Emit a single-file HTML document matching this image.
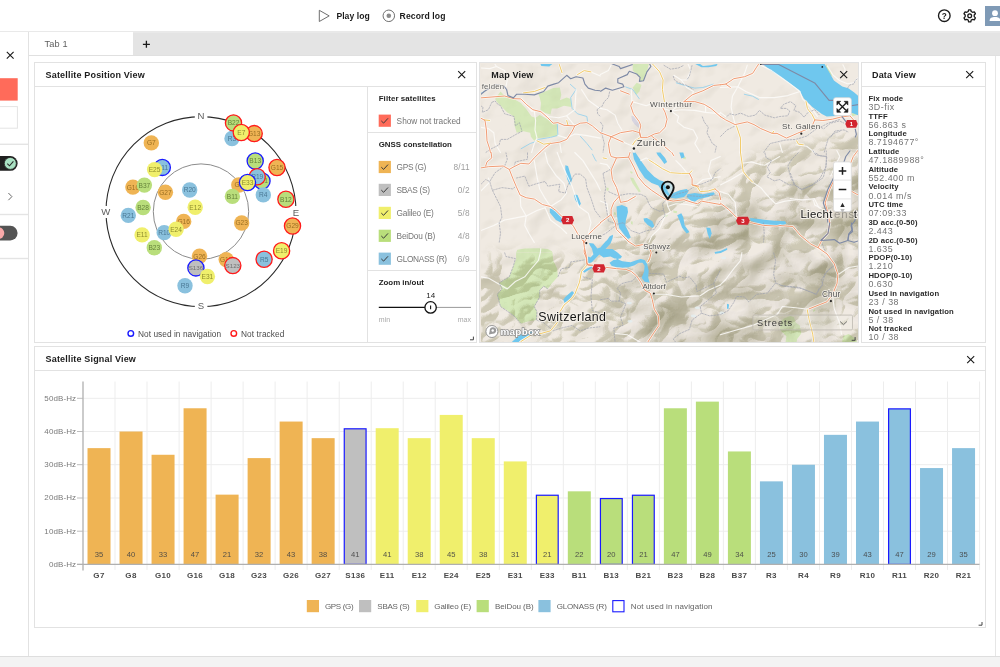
<!DOCTYPE html>
<html><head><meta charset="utf-8"><title>GNSS</title>
<style>
*{box-sizing:border-box;margin:0;padding:0}
html,body{width:1000px;height:667px;overflow:hidden;background:#fff;font-family:"Liberation Sans",sans-serif;}
body{position:relative;color:#222;will-change:transform}
.abs{position:absolute}
.t{position:absolute;white-space:nowrap;line-height:1}
.b{font-weight:bold}
.panel{position:absolute;background:#fff;border:1.5px solid #e2e2e2}
.hl{position:absolute;height:1.5px;background:#e2e2e2}
.vl{position:absolute;width:1.5px;background:#e2e2e2}
.cb{position:absolute;width:12px;height:12px}
.lab{color:#757575;font-size:8.3px}
.cnt{color:#9e9e9e;font-size:8.3px;letter-spacing:.25px}
.dl{font-weight:bold;font-size:7.9px;color:#2b2b2b;letter-spacing:.1px}
.dv{font-size:9.4px;color:#7d7d7d;letter-spacing:.25px}
svg text{font-family:"Liberation Sans",sans-serif}
</style></head><body>

<!-- top bar -->
<svg class="abs" style="left:0;top:0" width="1000" height="31" viewBox="0 0 1000 31">
  <path d="M319.3 10.3 L329.2 15.9 L319.3 21.5 Z" fill="none" stroke="#6f6f6f" stroke-width="1"/>
  <circle cx="388.8" cy="15.8" r="5.75" fill="none" stroke="#6f6f6f" stroke-width="1"/>
  <circle cx="388.8" cy="15.8" r="2.3" fill="#8a8a8a"/>
  <!-- help -->
  <circle cx="944.3" cy="15.7" r="5.8" fill="none" stroke="#1a1a1a" stroke-width="1.35"/>
  <text x="944.3" y="18.6" text-anchor="middle" font-size="8.2" font-weight="bold" fill="#1a1a1a">?</text>
  <!-- gear -->
  <g transform="translate(969.7 15.8)" fill="none" stroke="#1a1a1a">
    <circle r="1.9" stroke-width="1.3"/>
    <path stroke-width="1.3" stroke-linejoin="round" d="M-1.1,-6 L1.1,-6 L1.5,-4.3 L2.9,-3.5 L4.6,-4 L5.7,-2.1 L4.5,-0.8 L4.5,0.8 L5.7,2.1 L4.6,4 L2.9,3.5 L1.5,4.3 L1.1,6 L-1.1,6 L-1.5,4.3 L-2.9,3.5 L-4.6,4 L-5.7,2.1 L-4.5,0.8 L-4.5,-0.8 L-5.7,-2.1 L-4.6,-4 L-2.9,-3.5 L-1.5,-4.3 Z"/>
  </g>
  <!-- avatar -->
  <rect x="985" y="6" width="20" height="20" fill="#7f9ab6"/>
  <circle cx="995" cy="13.2" r="2.9" fill="#fff"/>
  <path d="M989.6 21 C989.6 17.6 992 16.9 995 16.9 C998 16.9 1000.4 17.6 1000.4 21 Z" fill="#fff"/>
</svg>
<div class="t b" style="left:336.4px;top:11.6px;font-size:8.6px;color:#1c1c1c;letter-spacing:.05px">Play log</div>
<div class="t b" style="left:399.6px;top:11.6px;font-size:8.6px;color:#1c1c1c;letter-spacing:.1px">Record log</div>

<!-- tab bar -->
<div class="abs" style="left:0;top:31px;width:1000px;height:25px;background:#e4e4e4"></div>
<div class="abs" style="left:0;top:31px;width:1000px;height:1.5px;background:#e9e9e9"></div>
<div class="abs" style="left:28px;top:55px;width:972px;height:1.3px;background:#e0e0e0"></div>
<div class="abs" style="left:29px;top:32.3px;width:104px;height:22.7px;background:#fff"></div>
<div class="t" style="left:44.6px;top:40.3px;font-size:9.2px;color:#5e5e5e;letter-spacing:.15px">Tab 1</div>
<svg class="abs" style="left:141px;top:39px" width="11" height="11" viewBox="0 0 11 11"><path d="M5.4 1.8V8.8M1.9 5.3H8.9" stroke="#1a1a1a" stroke-width="1.3" fill="none"/></svg>

<!-- sidebar -->
<div class="abs" style="left:0;top:32px;width:28px;height:625px;background:#fff"></div>
<div class="abs" style="left:28px;top:32px;width:1.4px;height:625px;background:#e2e2e2"></div>
<svg class="abs" style="left:0;top:32px" width="28" height="240" viewBox="0 32 28 240">
  <path d="M6.8 51.9 L13.6 58.7 M13.6 51.9 L6.8 58.7" stroke="#1a1a1a" stroke-width="1.1" fill="none"/>
  <rect x="-1" y="78.2" width="18.7" height="22.4" fill="#ff6b5a"/>
  <rect x="-1" y="106.6" width="18.4" height="21.6" fill="#fff" stroke="#e4e4e4" stroke-width="1"/>
  <rect x="0" y="143.6" width="28" height="1.4" fill="#e4e4e4"/>
  <rect x="-8" y="156" width="25.6" height="14.8" rx="7.4" fill="#1f1f1f"/>
  <circle cx="10.3" cy="163.4" r="6" fill="#a9e2c3" stroke="#2a2a2a" stroke-width=".8"/>
  <path d="M7.3 163.6 L9.5 165.8 L13.4 161.3" stroke="#2b2b2b" stroke-width="1.1" fill="none"/>
  <path d="M8.4 193 L11.9 196.6 L8.4 200.2" stroke="#6a6a6a" stroke-width="1" fill="none"/>
  <rect x="0" y="213.8" width="28" height="1.4" fill="#e4e4e4"/>
  <rect x="-8" y="225.8" width="25.6" height="14.6" rx="7.3" fill="#545454"/>
  <circle cx="-1.6" cy="233.1" r="5.9" fill="#f9a9a9"/>
  <rect x="0" y="257.8" width="28" height="1.4" fill="#e4e4e4"/>
</svg>

<!-- bottom bar -->
<div class="abs" style="left:0;top:656px;width:1000px;height:11px;background:#f3f3f3;border-top:1.4px solid #dedede"></div>
<!-- right scrollbar line -->
<div class="abs" style="left:995px;top:56px;width:1.3px;height:600px;background:#e6e6e6"></div>

<!-- ============ Satellite Position View ============ -->
<div class="panel" style="left:34px;top:62px;width:443px;height:281px"></div>
<div class="hl" style="left:34px;top:85.6px;width:443px"></div>
<div class="vl" style="left:366.5px;top:86px;height:256px"></div>
<div class="hl" style="left:367px;top:131.6px;width:110px"></div>
<div class="hl" style="left:367px;top:269.6px;width:110px"></div>
<div class="t b" style="left:45.6px;top:71.1px;font-size:9px;color:#1c1c1c;letter-spacing:.17px">Satellite Position View</div>
<svg class="abs" style="left:456px;top:69px" width="12" height="12" viewBox="0 0 12 12"><path d="M2.2 2.2 L9.2 9.2 M9.2 2.2 L2.2 9.2" stroke="#1a1a1a" stroke-width="1.1" fill="none"/></svg>

<svg class="abs" style="left:35px;top:87px" width="332" height="255" viewBox="35 87 332 255">
  <circle cx="201" cy="211.6" r="95" fill="none" stroke="#2a2a2a" stroke-width="1.1"/>
  <circle cx="201" cy="211.6" r="47.7" fill="none" stroke="#8c8c8c" stroke-width="1"/>
  <rect x="194.8" y="111" width="12.6" height="10" fill="#fff"/>
  <rect x="194.8" y="301" width="12.6" height="10" fill="#fff"/>
  <rect x="100" y="206" width="12" height="12" fill="#fff"/>
  <rect x="290" y="206" width="12" height="12" fill="#fff"/>
  <g font-size="9.6" fill="#5c5c5c" text-anchor="middle">
    <text x="200.9" y="118.8">N</text>
    <text x="200.9" y="309">S</text>
    <text x="105.7" y="215">W</text>
    <text x="296" y="215.6">E</text>
  </g>
<circle cx="232" cy="138.5" r="7.7" fill="#8ac1de"/>
<text x="232" y="140.9" text-anchor="middle" font-size="6.6" fill="#4a7894">R3</text>
<circle cx="233.5" cy="122.9" r="8.1" fill="#b9de7b" stroke="#ff1a1a" stroke-width="1.3"/>
<text x="233.5" y="125.30000000000001" text-anchor="middle" font-size="6.6" fill="#66833a">B22</text>
<circle cx="254.2" cy="133.6" r="8.1" fill="#efb454" stroke="#ff1a1a" stroke-width="1.3"/>
<text x="254.2" y="136.0" text-anchor="middle" font-size="6.6" fill="#9a6f22">G13</text>
<circle cx="241.3" cy="132.5" r="8.1" fill="#f0ef6c" stroke="#ff1a1a" stroke-width="1.3"/>
<text x="241.3" y="134.9" text-anchor="middle" font-size="6.6" fill="#8f8e2e">E7</text>
<circle cx="151.3" cy="142.9" r="7.7" fill="#efb454"/>
<text x="151.3" y="145.3" text-anchor="middle" font-size="6.6" fill="#9a6f22">G7</text>
<circle cx="255.2" cy="161" r="8.1" fill="#b9de7b" stroke="#1a1aff" stroke-width="1.3"/>
<text x="255.2" y="163.4" text-anchor="middle" font-size="6.6" fill="#66833a">B13</text>
<circle cx="277" cy="167.5" r="8.1" fill="#efb454" stroke="#ff1a1a" stroke-width="1.3"/>
<text x="277" y="169.9" text-anchor="middle" font-size="6.6" fill="#9a6f22">G15</text>
<circle cx="162.3" cy="167.4" r="8.1" fill="#8ac1de" stroke="#1a1aff" stroke-width="1.3"/>
<text x="162.3" y="169.8" text-anchor="middle" font-size="6.6" fill="#4a7894">R11</text>
<circle cx="154.6" cy="169.6" r="7.7" fill="#f0ef6c"/>
<text x="154.6" y="172.0" text-anchor="middle" font-size="6.6" fill="#8f8e2e">E25</text>
<circle cx="262" cy="181" r="8.1" fill="#b9de7b" stroke="#1a1aff" stroke-width="1.3"/>
<text x="262" y="183.4" text-anchor="middle" font-size="6.6" fill="#66833a">B21</text>
<circle cx="257.2" cy="176.8" r="8.1" fill="#8ac1de" stroke="#ff1a1a" stroke-width="1.3"/>
<text x="257.2" y="179.20000000000002" text-anchor="middle" font-size="6.6" fill="#4a7894">R19</text>
<circle cx="238.8" cy="185" r="7.7" fill="#efb454"/>
<text x="238.8" y="187.4" text-anchor="middle" font-size="6.6" fill="#9a6f22">G8</text>
<circle cx="247.5" cy="182.5" r="8.1" fill="#f0ef6c" stroke="#1a1aff" stroke-width="1.3"/>
<text x="247.5" y="184.9" text-anchor="middle" font-size="6.6" fill="#8f8e2e">E33</text>
<circle cx="132.9" cy="187.1" r="7.7" fill="#efb454"/>
<text x="132.9" y="189.5" text-anchor="middle" font-size="6.6" fill="#9a6f22">G10</text>
<circle cx="144.4" cy="185.1" r="7.7" fill="#b9de7b"/>
<text x="144.4" y="187.5" text-anchor="middle" font-size="6.6" fill="#66833a">B37</text>
<circle cx="165.4" cy="192.3" r="7.7" fill="#efb454"/>
<text x="165.4" y="194.70000000000002" text-anchor="middle" font-size="6.6" fill="#9a6f22">G27</text>
<circle cx="189.7" cy="190" r="7.7" fill="#8ac1de"/>
<text x="189.7" y="192.4" text-anchor="middle" font-size="6.6" fill="#4a7894">R20</text>
<circle cx="232.4" cy="196.4" r="7.7" fill="#b9de7b"/>
<text x="232.4" y="198.8" text-anchor="middle" font-size="6.6" fill="#66833a">B11</text>
<circle cx="263.3" cy="194.9" r="7.7" fill="#8ac1de"/>
<text x="263.3" y="197.3" text-anchor="middle" font-size="6.6" fill="#4a7894">R4</text>
<circle cx="285.9" cy="199.3" r="8.1" fill="#b9de7b" stroke="#ff1a1a" stroke-width="1.3"/>
<text x="285.9" y="201.70000000000002" text-anchor="middle" font-size="6.6" fill="#66833a">B12</text>
<circle cx="195.2" cy="207.2" r="7.7" fill="#f0ef6c"/>
<text x="195.2" y="209.6" text-anchor="middle" font-size="6.6" fill="#8f8e2e">E12</text>
<circle cx="143.1" cy="207.5" r="7.7" fill="#b9de7b"/>
<text x="143.1" y="209.9" text-anchor="middle" font-size="6.6" fill="#66833a">B28</text>
<circle cx="128.3" cy="215.4" r="7.7" fill="#8ac1de"/>
<text x="128.3" y="217.8" text-anchor="middle" font-size="6.6" fill="#4a7894">R21</text>
<circle cx="183.7" cy="221.4" r="7.7" fill="#efb454"/>
<text x="183.7" y="223.8" text-anchor="middle" font-size="6.6" fill="#9a6f22">G16</text>
<circle cx="241.7" cy="223" r="7.7" fill="#efb454"/>
<text x="241.7" y="225.4" text-anchor="middle" font-size="6.6" fill="#9a6f22">G23</text>
<circle cx="292.5" cy="226" r="8.1" fill="#efb454" stroke="#ff1a1a" stroke-width="1.3"/>
<text x="292.5" y="228.4" text-anchor="middle" font-size="6.6" fill="#9a6f22">G29</text>
<circle cx="164.2" cy="232.6" r="7.7" fill="#8ac1de"/>
<text x="164.2" y="235.0" text-anchor="middle" font-size="6.6" fill="#4a7894">R10</text>
<circle cx="176.1" cy="229.3" r="7.7" fill="#f0ef6c"/>
<text x="176.1" y="231.70000000000002" text-anchor="middle" font-size="6.6" fill="#8f8e2e">E24</text>
<circle cx="142.1" cy="234.9" r="7.7" fill="#f0ef6c"/>
<text x="142.1" y="237.3" text-anchor="middle" font-size="6.6" fill="#8f8e2e">E11</text>
<circle cx="154.3" cy="247.8" r="7.7" fill="#b9de7b"/>
<text x="154.3" y="250.20000000000002" text-anchor="middle" font-size="6.6" fill="#66833a">B23</text>
<circle cx="281.6" cy="250.7" r="8.1" fill="#f0ef6c" stroke="#ff1a1a" stroke-width="1.3"/>
<text x="281.6" y="253.1" text-anchor="middle" font-size="6.6" fill="#8f8e2e">E19</text>
<circle cx="199.5" cy="256.3" r="7.7" fill="#efb454"/>
<text x="199.5" y="258.7" text-anchor="middle" font-size="6.6" fill="#9a6f22">G26</text>
<circle cx="264.1" cy="259.3" r="8.1" fill="#8ac1de" stroke="#ff1a1a" stroke-width="1.3"/>
<text x="264.1" y="261.7" text-anchor="middle" font-size="6.6" fill="#4a7894">R5</text>
<circle cx="226.2" cy="259.6" r="7.7" fill="#efb454"/>
<text x="226.2" y="262.0" text-anchor="middle" font-size="6.6" fill="#9a6f22">G18</text>
<circle cx="232.8" cy="265.6" r="8.1" fill="#bfbfbf" stroke="#ff1a1a" stroke-width="1.3"/>
<text x="232.8" y="268.0" text-anchor="middle" font-size="6.2" fill="#6f6f6f">S123</text>
<circle cx="195.9" cy="267.9" r="8.1" fill="#bfbfbf" stroke="#1a1aff" stroke-width="1.3"/>
<text x="195.9" y="270.29999999999995" text-anchor="middle" font-size="6.2" fill="#6f6f6f">S136</text>
<circle cx="207.4" cy="276.5" r="7.7" fill="#f0ef6c"/>
<text x="207.4" y="278.9" text-anchor="middle" font-size="6.6" fill="#8f8e2e">E31</text>
<circle cx="185" cy="285.7" r="7.7" fill="#8ac1de"/>
<text x="185" y="288.09999999999997" text-anchor="middle" font-size="6.6" fill="#4a7894">R9</text>
  <circle cx="130.8" cy="333.4" r="2.8" fill="#fff" stroke="#1a1aff" stroke-width="1.4"/>
  <circle cx="233.8" cy="333.4" r="2.8" fill="#fff" stroke="#ff1a1a" stroke-width="1.4"/>
</svg>
<div class="t" style="left:138px;top:329.8px;font-size:8.3px;color:#4c4c4c;letter-spacing:.05px">Not used in navigation</div>
<div class="t" style="left:241px;top:329.8px;font-size:8.3px;color:#4c4c4c;letter-spacing:.1px">Not tracked</div>

<!-- filter side panel -->
<div class="t b" style="left:378.7px;top:95.4px;font-size:7.9px;color:#1f1f1f;letter-spacing:.1px">Filter satellites</div>
<div class="t b" style="left:378.7px;top:141.2px;font-size:7.9px;color:#1f1f1f;letter-spacing:0px">GNSS constellation</div>
<div class="t b" style="left:378.7px;top:278.6px;font-size:7.9px;color:#1f1f1f;letter-spacing:0px">Zoom in/out</div>

<svg class="abs" style="left:368px;top:87px" width="108" height="255" viewBox="368 87 108 255">
  <defs><path id="ck" d="M2.6 6.3 L4.9 8.5 L9.3 3.7" stroke="#3a3a3a" stroke-width="1" fill="none"/></defs>
  <g transform="translate(378.7 114.6)"><rect width="12.2" height="12.2" fill="#ff6b5a"/><use href="#ck"/></g>
  <g transform="translate(378.7 160.9)"><rect width="12.2" height="12.2" fill="#efb454"/><use href="#ck"/></g>
  <g transform="translate(378.7 183.8)"><rect width="12.2" height="12.2" fill="#bfbfbf"/><use href="#ck"/></g>
  <g transform="translate(378.7 206.8)"><rect width="12.2" height="12.2" fill="#f0ef6c"/><use href="#ck"/></g>
  <g transform="translate(378.7 229.7)"><rect width="12.2" height="12.2" fill="#b9de7b"/><use href="#ck"/></g>
  <g transform="translate(378.7 252.6)"><rect width="12.2" height="12.2" fill="#8ac1de"/><use href="#ck"/></g>
  <!-- slider -->
  <line x1="378.8" y1="307.4" x2="430" y2="307.4" stroke="#111" stroke-width="1.2"/>
  <line x1="430" y1="307.4" x2="471" y2="307.4" stroke="#9a9a9a" stroke-width="1"/>
  <circle cx="430.6" cy="307.4" r="5.7" fill="#fff" stroke="#111" stroke-width="1.3"/>
  <line x1="430.6" y1="305.5" x2="430.6" y2="309.3" stroke="#111" stroke-width="1.1"/>
  <path d="M470 339.8 H473.4 V336.6" stroke="#444" stroke-width="1" fill="none"/>
</svg>
<div class="t lab" style="left:396.6px;top:116.8px">Show not tracked</div>
<div class="t lab" style="left:396.6px;top:163px;letter-spacing:-.35px">GPS (G)</div>
<div class="t lab" style="left:396.6px;top:185.9px;letter-spacing:-.3px">SBAS (S)</div>
<div class="t lab" style="left:396.6px;top:208.9px;letter-spacing:-.2px">Galileo (E)</div>
<div class="t lab" style="left:396.6px;top:231.8px;letter-spacing:-.2px">BeiDou (B)</div>
<div class="t lab" style="left:396.6px;top:254.7px;letter-spacing:-.35px">GLONASS (R)</div>
<div class="t cnt" style="right:530px;top:163px">8/11</div>
<div class="t cnt" style="right:530px;top:185.9px">0/2</div>
<div class="t cnt" style="right:530px;top:208.9px">5/8</div>
<div class="t cnt" style="right:530px;top:231.8px">4/8</div>
<div class="t cnt" style="right:530px;top:254.7px">6/9</div>
<div class="t" style="left:425.8px;top:291.5px;font-size:8px;color:#222;width:10px;text-align:center">14</div>
<div class="t" style="left:378.8px;top:316.3px;font-size:7px;color:#a8a8a8">min</div>
<div class="t" style="right:529px;top:316.3px;font-size:7px;color:#a8a8a8">max</div>

<!-- ============ Map View ============ -->
<div class="panel" style="left:479.2px;top:62px;width:380px;height:281px;background:#efe9e1"></div>
<div class="abs" style="left:480.7px;top:63.5px;width:377px;height:278px;overflow:hidden">
<svg width="377" height="278" viewBox="480.7 63.5 377 278" style="position:absolute;left:0;top:0;display:block">
<defs>
  <filter id="hs" x="0" y="0" width="100%" height="100%" color-interpolation-filters="sRGB">
    <feTurbulence type="turbulence" baseFrequency="0.016 0.02" numOctaves="3" seed="11" result="n"/>
    <feDiffuseLighting in="n" surfaceScale="12" diffuseConstant="1.15" lighting-color="#ffffff" result="l"><feDistantLight azimuth="225" elevation="42"/></feDiffuseLighting>
    <feComponentTransfer in="l" result="d">
      <feFuncR type="discrete" tableValues="0.86 0.86 0.86 0.86 0.88 0.91 0.95 0.99 1 1"/>
      <feFuncG type="discrete" tableValues="0.86 0.86 0.86 0.86 0.88 0.91 0.95 0.99 1 1"/>
      <feFuncB type="discrete" tableValues="0.80 0.80 0.80 0.80 0.83 0.87 0.93 0.985 1 1"/>
    </feComponentTransfer>
    <feGaussianBlur in="d" stdDeviation="0.55"/>
  </filter>
  <filter id="hs2" x="0" y="0" width="100%" height="100%" color-interpolation-filters="sRGB">
    <feTurbulence type="fractalNoise" baseFrequency="0.022 0.026" numOctaves="3" seed="5" result="n"/>
    <feDiffuseLighting in="n" surfaceScale="5" diffuseConstant="1.1" lighting-color="#ffffff" result="l"><feDistantLight azimuth="225" elevation="45"/></feDiffuseLighting>
    <feColorMatrix in="l" type="matrix" values="0.16 0 0 0 0.875  0.16 0 0 0 0.875  0.2 0 0 0 0.845  0 0 0 0 1"/>
  </filter>
  <filter id="bl" x="-20%" y="-20%" width="140%" height="140%"><feGaussianBlur stdDeviation="7"/></filter>
  <mask id="alp" maskUnits="userSpaceOnUse" x="470" y="55" width="400" height="300">
    <rect x="470" y="55" width="400" height="300" fill="#000"/>
    <path filter="url(#bl)" fill="#fff" d="M460,256 L520,252 L560,254 L590,262 L606,238 L614,210 L640,204 L690,194 L720,170 L760,154 L800,144 L840,134 L880,128 L880,370 L460,370 Z"/>
  </mask>
  <filter id="hs3" x="0" y="0" width="100%" height="100%" color-interpolation-filters="sRGB">
    <feTurbulence type="fractalNoise" baseFrequency="0.02 0.024" numOctaves="2" seed="23" result="n"/>
    <feDiffuseLighting in="n" surfaceScale="18" diffuseConstant="1.15" lighting-color="#ffffff" result="l"><feDistantLight azimuth="225" elevation="42"/></feDiffuseLighting>
    <feColorMatrix in="l" type="matrix" values="0.22 0 0 0 0.78  0.22 0 0 0 0.78  0.30 0 0 0 0.71  0 0 0 0 1"/>
  </filter>
  <mask id="alp2" maskUnits="userSpaceOnUse" x="470" y="55" width="400" height="300">
    <rect x="470" y="55" width="400" height="300" fill="#000"/>
    <path filter="url(#bl)" fill="#fff" d="M600,370 L610,300 L640,262 L690,225 L730,205 L780,190 L830,170 L880,160 L880,370 Z"/>
  </mask>
</defs>
<rect x="480" y="63" width="379" height="280" fill="#f0eae2"/>
<g fill="#d3e8b6" opacity=".92">
  <path d="M494.8,98.4L500.2,91.0L503.6,94.4L513.7,98.4L520.5,102.5L525.9,108.6L531.3,116.0L535.3,117.3L539.4,114.6L547.5,118.7L555.6,122.7L557.6,125.4L556.9,135.6L544.8,136.9L538.0,137.6L534.0,140.3L530.6,136.2L529.9,132.2L523.2,130.8L516.4,132.2L514.4,125.4L513.7,116.0L507.0,111.9L501.6,106.5L496.2,101.1Z"/>
  <path d="M538.0,93.7L544.8,91.0L552.9,87.6L559.6,87.0L561.0,94.4L559.6,99.8L566.4,97.1L570.4,98.4L571.1,106.5L563.7,105.2L556.9,107.9L551.5,107.9L550.2,114.0L544.8,112.6L540.1,109.2L540.7,102.5L539.4,97.1Z"/>
  <path d="M632.4,63.3L648.6,63.3L646.6,71.4L643.2,80.2L639.1,80.9L639.8,76.8L636.4,73.5L632.4,70.1Z"/>
  <path d="M636.4,82.2L641.2,84.3L639.1,91.0L635.8,94.4L632.4,87.0Z"/>
  <path d="M629.7,177.0L633.1,177.6L640.5,191.1L638.5,191.8L632.4,183.0Z"/>
  <path d="M630.0,170.6L632.4,171.6L631.9,173.3L630.2,172.5Z"/>
  <path d="M672.9,210.0L676.9,210.7L676.3,212.7L673.2,212.2Z"/>
  <path d="M663.4,215.4L667.5,213.4L667.0,215.4L664.0,217.1Z"/>
  <path d="M613.5,211.4L615.5,212.1L615.4,214.8L613.8,214.1Z"/>
  <path d="M630.4,220.8L632.4,221.1L632.4,224.2L630.8,223.5Z"/>
  <path d="M606.1,187.1L608.4,187.4L608.1,190.5L606.2,189.8Z"/>
  <path d="M682.3,156.0L685.7,156.7L685.3,158.7L682.6,158.2Z"/>
  <path d="M515.8,252.0L552.2,252.0L552.9,260.1L556.9,268.2L557.6,276.3L551.5,283.0L547.5,288.4L543.4,285.7L539.4,289.8L539.4,296.5L534.0,306.0L536.7,311.4L536.0,319.5L528.6,320.8L520.5,322.9L513.7,315.4L507.0,310.0L500.2,306.0L496.9,293.8L501.6,288.4L498.9,282.4L509.0,276.3L513.1,265.5L515.8,258.7Z"/>
  <path d="M515.8,252.1L517.1,249.3L524.5,248.0L538.0,247.7L547.5,248.5L551.5,250.7L552.2,252.1Z"/>
  <path d="M783.4,318.1L790.2,315.4L793.6,316.8L795.6,322.2L799.6,324.9L801.0,333.0L796.9,338.4L795.6,345.1L784.8,345.1L786.1,335.7L779.4,328.9L780.7,320.8Z"/>
  <path d="M812.5,310.3L814.5,308.7L815.2,309.8L813.1,311.4Z"/>
  <path d="M841.2,344.4L843.0,335.4L848.4,333.6L853.8,337.2L859.2,344.4Z"/>
  <path d="M850,108 L857,104 L858,114 L852,116Z"/>
  <path d="M826,64 L830,70 L832,76 L829,74 L825,66Z"/>
</g>
<g fill="#d8d5e0">  <path d="M631.0,115.3L633.7,116.0L639.1,123.4L638.5,127.5L634.4,124.1L631.7,120.0Z"/></g>
<g style="mix-blend-mode:multiply"><rect x="480" y="63" width="379" height="280" filter="url(#hs2)"/></g>
<g style="mix-blend-mode:multiply" mask="url(#alp)"><rect x="480" y="63" width="379" height="280" filter="url(#hs)"/></g>
<g style="mix-blend-mode:multiply" mask="url(#alp2)"><rect x="480" y="63" width="379" height="280" filter="url(#hs3)"/></g>
<ellipse cx="629.0" cy="302.6" rx="2.6" ry="1.4" fill="#e4eff1" opacity=".8"/><ellipse cx="629.7" cy="320.8" rx="2.6" ry="1.4" fill="#e4eff1" opacity=".8"/><ellipse cx="697.2" cy="307.3" rx="2.6" ry="1.4" fill="#e4eff1" opacity=".8"/><ellipse cx="693.1" cy="315.4" rx="2.6" ry="1.4" fill="#e4eff1" opacity=".8"/><ellipse cx="723.4" cy="257.4" rx="2.6" ry="1.4" fill="#e4eff1" opacity=".8"/><ellipse cx="721.6" cy="312.5" rx="2.6" ry="1.4" fill="#e4eff1" opacity=".8"/>
<g fill="none" stroke="#8fd0ee" stroke-width=".9" stroke-linejoin="round" opacity=".9">
  <path d="M569.8,83.6L575.8,89.0L570.4,97.1L571.8,107.9L577.2,113.3L586.6,116.0L587.3,121.4"/>
  <path d="M579.9,135.6L586.6,143.0L592.0,149.7"/>
  <path d="M556.9,121.4L557.6,134.9L550.2,136.9L538.0,138.9L534.0,141.6L529.9,143.0L520.5,148.4"/>
  <path d="M480.0,93.0L484.0,91.0L486.7,88.3"/>
  <path d="M675.6,82.2L686.4,85.6L694.5,87.6L702.6,87.0L713.4,83.6"/>
  <path d="M625.0,86.3L632.4,89.0L639.1,98.4"/>
  <path d="M743.6,93.7L752.4,95.7L758.5,99.1"/>
  <path d="M592.0,153.3L594.7,158.7L596.1,160.8"/>
</g>
<g fill="#6fc7ee">
  <path d="M761.6,63 L771.2,70.4 L785.6,80 L798.8,89.6 L803.6,98 L812,106.4 L821.6,113.6 L826.4,116 L836,115.6 L846,114 L852,112.4 L858,115 L858,95.6 L854,92 L848,87.8 L842,86 L833.6,80 L828.8,71.6 L824,63Z"/>
  <path d="M694.5,63.3L698.5,62.7L702.6,65.4L710.7,64.7L717.4,63.3L716.1,65.4L708.0,66.7L701.2,66.7Z"/>
  <path d="M565.0,164.8L567.7,165.5L571.8,179.0L569.8,185.1L567.1,179.0L565.0,169.5Z"/>
  <path d="M574.5,194.5L577.2,194.5L580.6,203.3L579.2,205.3L574.5,198.6Z"/>
  <path d="M549.5,208.0L552.9,208.7L561.0,216.1L561.0,222.2L555.6,219.5L549.5,212.1Z"/>
  <path d="M632.4,152.0L633.7,158.7L639.1,169.5L644.5,177.6L651.3,182.4L658.0,185.1L660.7,189.1L666.1,193.8L670.2,197.2L675.6,197.9L683.7,196.5L686.4,193.8L688.4,190.5L686.4,188.4L679.6,189.8L672.9,192.5L670.2,195.2L667.5,191.1L663.4,181.0L659.4,179.7L654.0,176.3L647.2,169.5L640.5,160.1L635.1,152.0Z"/>
  <path d="M687.1,193.8L694.5,192.5L702.6,193.8L713.4,191.8L714.7,193.8L708.0,196.5L698.5,198.6L694.5,201.3L690.4,199.9L686.4,196.5Z"/>
  <path d="M656.0,152.0L660.1,152.0L664.8,157.4L666.8,161.4L664.1,163.5L660.7,158.7L657.4,154.7Z"/>
  <path d="M679.0,152.0L683.0,152.0L684.4,156.7L681.0,158.1Z"/>
  <path d="M616.2,206.0L621.6,204.6L627.0,206.7L627.7,211.4L625.6,219.5L625.0,224.9L628.3,231.6L630.4,237.0L627.7,238.4L622.9,233.0L618.9,227.6L616.9,216.8Z"/>
  <path d="M643.2,218.1L646.6,217.5L652.0,220.8L654.0,225.6L652.0,227.6L647.2,224.2L643.9,220.8Z"/>
  <path d="M676.9,214.8L681.0,212.7L683.0,216.8L684.4,224.9L689.1,231.6L686.4,233.0L681.7,226.9L679.0,219.5Z"/>
  <path d="M706.0,226.9L710.0,227.6L711.4,233.0L709.3,238.4L707.3,233.0Z"/>
  <path d="M605.4,242.0L609.4,235.7L612.8,234.3L610.8,239.7L609.4,242.0Z"/>
  <path d="M749.7,217.5L760.5,218.8L774.0,220.2L784.8,220.8L786.1,222.9L783.4,224.2L774.0,224.9L760.5,223.5L750.4,220.2Z"/>
  <path d="M563.0,299.2L565.0,296.5L571.8,290.5L573.8,292.5L569.1,298.6L564.4,302.6Z"/>
  <path d="M511.0,342.0L516.4,337.0L524.5,331.6L531.3,330.3L534.0,333.0L527.2,335.7L520.5,339.7L517.8,342.0L515.1,345.1L508.3,345.1Z"/>
  <path d="M726.7,303.3L728.8,304.0L728.1,308.7L726.7,308.0Z"/>
  <path d="M588.6,242.6L593.1,243.1L597.1,248.1L600.1,247.1L605.2,241.1L610.2,237.0L612.7,234.5L612.2,238.0L610.2,243.1L605.2,248.6L612.2,248.6L617.2,252.1L621.7,256.1L620.2,258.1L618.0,258.3L618.4,259.3L622.2,260.7L630.3,261.7L635.3,260.1L640.3,258.6L644.3,259.6L646.8,263.2L648.4,270.2L647.9,277.2L649.4,282.2L644.3,281.2L641.3,277.2L643.8,271.2L644.3,265.2L642.3,262.2L638.3,262.2L634.3,264.7L628.3,266.7L622.2,267.2L616.2,266.7L611.2,265.2L609.2,262.2L613.2,259.6L616.4,259.1L616.0,258.1L614.2,258.1L610.2,256.1L603.1,257.1L599.1,254.1L595.1,258.1L591.6,261.7L588.1,262.7L587.6,256.1L590.1,257.1L593.1,254.1L591.6,248.1L589.6,245.1Z"/>
  <path d="M582.6,270.7L586.1,268.2L591.6,265.7L592.1,267.2L587.1,270.2L584.1,272.2Z"/>
  <path d="M642.3,245.6L646.3,247.1L647.9,249.6L644.8,248.6Z"/>
  <path d="M540,63 L552,63.6 L549,66 L541,65.6Z"/>
  <path d="M573.6,194.5 L576,194 L578.8,199 L579,202.5 L576,201.5Z"/>
  <path d="M549.6,209.6 L552.4,208 L557,213 L562.6,219.8 L561.2,222 L555,217.6 L550.6,212.8Z"/>
  <path d="M714.3,251.6 L720,250.4 L726.8,247.6 L727,249.2 L720.5,252.4 L714.8,253.2Z"/>
</g>
<g fill="none" stroke="#fdfcfa" stroke-width="1.1" stroke-linejoin="round" stroke-linecap="round" opacity=".85">
  <path d="M480.0,67.4L489.4,68.1L496.2,66.0L504.3,70.1L507.0,79.5L505.6,86.3"/>
  <path d="M534.0,110.6L535.3,120.0L534.7,129.5L536.7,137.6L534.0,143.0L531.3,152.0"/>
  <path d="M540.7,111.3L547.5,116.0L558.3,117.3L566.4,115.3L574.5,109.2L575.8,89.0"/>
  <path d="M566.4,115.3L574.5,125.4"/>
  <path d="M581.2,89.0L588.0,99.8L597.4,106.5L600.0,107.9"/>
  <path d="M480.0,126.8L488.1,128.1L493.5,132.2L494.8,143.0L500.2,152.0"/>
  <path d="M520.5,98.4L531.3,110.6L534.0,110.6"/>
  <path d="M557.6,134.9L566.4,137.6L574.5,133.5L585.3,134.9L600.0,137.6"/>
  <path d="M559.6,143.0L561.0,152.0"/>
  <path d="M590.7,71.4L600.0,75.5"/>
  <path d="M496.2,66.0L493.5,62.0"/>
  <path d="M673.6,74.8L681.0,79.5L686.4,87.0L693.1,91.0L691.8,94.4"/>
  <path d="M670.9,110.6L678.3,116.0L676.9,121.4L683.7,126.8L693.1,129.5L697.2,137.6L694.5,143.0L699.9,152.0"/>
  <path d="M670.9,110.6L681.0,109.2L694.5,109.9L705.3,111.9L720.0,113.3"/>
  <path d="M705.3,103.8L705.3,111.9"/>
  <path d="M631.0,89.0L631.7,101.1L645.9,105.2L649.9,103.8L662.8,107.9"/>
  <path d="M600.0,107.9L606.7,109.2L614.8,114.6L617.5,122.7L621.6,129.5"/>
  <path d="M687.7,63.3L690.4,70.1L686.4,79.5L681.0,79.5"/>
  <path d="M600.0,74.1L608.1,70.1L610.8,64.7"/>
  <path d="M662.8,107.9L670.9,110.6L683.7,101.1"/>
  <path d="M622.9,141.6L632.4,145.7L633.7,152.0"/>
  <path d="M720.0,87.0L737.5,86.3L745.6,91.0L759.1,97.1L774.0,97.1L787.5,95.1L799.6,91.0"/>
  <path d="M737.5,86.3L732.1,95.7L730.8,106.5L732.8,116.0L734.8,124.1"/>
  <path d="M747.0,64.7L744.3,72.8L737.5,86.3"/>
  <path d="M760.5,64.7L771.3,70.1L780.7,76.8L790.2,83.6L799.6,91.0L802.3,98.4L809.1,105.2L817.2,116.0"/>
  <path d="M720.0,111.9L725.4,116.0"/>
  <path d="M779.4,143.0L782.1,152.0"/>
  <path d="M795.6,144.3L806.4,145.7L814.5,152.0"/>
  <path d="M480.0,191.1L489.4,181.7L488.1,177.6"/>
  <path d="M534.0,160.1L536.7,176.3L539.4,188.4L544.8,197.9L550.2,206.0"/>
  <path d="M544.8,152.0L547.5,162.8L555.6,174.9L563.7,183.0L566.4,192.5L561.0,199.2L550.2,206.0"/>
  <path d="M556.9,152.0L561.0,162.8L571.8,185.7L578.5,206.0L588.0,212.7L590.7,222.2L588.0,233.0"/>
  <path d="M574.5,152.0L582.6,160.1L589.3,170.9L596.1,181.7L600.0,189.8"/>
  <path d="M519.8,194.5L520.5,206.0L525.9,215.4L524.5,224.9L528.6,233.0L534.0,242.0"/>
  <path d="M525.9,215.4L536.7,210.0L544.8,207.3"/>
  <path d="M480.0,230.3L493.5,224.9L504.3,219.5L525.9,215.4"/>
  <path d="M544.8,207.3L550.2,219.5L561.0,227.6L566.4,233.0"/>
  <path d="M600.0,200.6L606.7,203.3L608.1,214.1"/>
  <path d="M664.8,215.4L659.4,227.6L651.3,235.7L648.6,242.0"/>
  <path d="M667.5,206.0L670.2,211.4L664.8,215.4"/>
  <path d="M666.1,199.2L667.5,206.0L675.6,203.3L686.4,204.0L697.2,206.0"/>
  <path d="M720.0,156.0L710.7,160.1L708.0,170.9L712.0,179.0"/>
  <path d="M694.5,185.7L702.6,179.0L720.0,176.3"/>
  <path d="M600.0,162.8L606.7,164.1L610.8,169.5"/>
  <path d="M640.5,160.1L645.9,157.4L654.0,162.8"/>
  <path d="M675.6,160.1L681.0,165.5L686.4,172.2"/>
  <path d="M720.0,184.4L730.8,179.0L742.3,172.2"/>
  <path d="M742.3,162.8L751.0,161.4L760.5,164.1L764.5,164.8L779.4,156.0"/>
  <path d="M752.4,181.7L760.5,187.1L767.2,195.2L775.3,203.3L784.8,200.6L795.6,199.2L813.1,199.2L814.5,204.6L819.9,207.3"/>
  <path d="M720.0,191.1L728.1,193.8L734.8,201.9L736.2,216.8"/>
  <path d="M540.5,248.0L540.1,252.0L538.0,260.1L529.9,269.5L524.5,276.3L515.1,281.0L507.0,288.4L498.9,283.7L488.1,277.6L480.0,276.3"/>
  <path d="M654.0,293.8L664.8,293.8L681.0,296.5L699.9,295.2L708.0,289.8L720.0,284.4"/>
  <path d="M614.8,333.0L627.0,334.3L640.5,342.0"/>
  <path d="M720.0,284.4L725.4,279.0L733.5,268.2L740.2,260.1L741.6,252.0"/>
  <path d="M720.0,334.3L733.5,330.3L752.4,324.9L776.7,314.1L782.1,306.0L795.6,307.3L807.7,308.7"/>
  <path d="M837.6,274.2L848.4,267.0L859.2,265.2"/>
  <path d="M832.2,294.0L834.0,308.4L839.4,322.8L841.2,333.6"/>
  <path d="M790.0,198.0L802.0,199.5L814.0,198.0L818.5,207.0L824.5,210.0"/>
  <path d="M836.5,150.0L839.5,156.0L835.0,165.0L830.5,175.5"/>
  <path d="M826.9,65.4L832.5,74.4L839.2,80.0L847.1,83.3L853.8,82.2L857.2,77.7"/>
  <path d="M842.6,64.2L844.8,68.7L843.7,73.2"/>
</g>
<g fill="none" stroke="#9a9dac" stroke-width=".75" stroke-dasharray="2.4 .7" stroke-linejoin="round" opacity=".85">
  <path d="M491.5,101.8L494.8,100.5L497.5,103.8L500.2,105.2L504.3,113.3L513.7,116.0L515.1,125.4L519.1,122.1L521.8,130.8L516.4,133.5L507.0,138.9L500.2,138.9L498.9,144.3L490.8,148.4L485.4,152.0"/>
  <path d="M480.0,105.2L482.7,106.5L482.0,111.9L488.1,109.2L491.5,101.8"/>
  <path d="M600.0,106.5L596.8,109.2L597.4,113.3L600.0,116.0"/>
  <path d="M609.4,91.0L608.1,97.1L604.0,101.1L601.3,106.5"/>
  <path d="M701.9,116.0L703.9,121.4L708.0,126.8L706.6,132.2L712.0,143.0L716.1,145.7L714.7,152.0"/>
  <path d="M672.9,75.5L674.2,79.5L678.3,82.2L686.4,84.9L693.1,89.0"/>
  <path d="M663.4,64.7L670.2,68.7L678.3,67.4L683.7,64.7"/>
  <path d="M691.8,64.7L689.1,75.5L686.4,79.5"/>
  <path d="M600.0,121.4L602.7,125.4L601.3,132.2L604.0,143.0L602.7,152.0"/>
  <path d="M726.7,116.0L729.4,113.3L734.8,114.6L740.2,112.6L748.3,116.0L755.1,114.6L759.1,109.9L764.5,114.6L774.0,117.3L779.4,116.0L787.5,115.3L789.5,110.6L786.1,107.9L780.1,107.9L783.4,103.8L790.2,101.1L795.6,105.2L793.6,109.9L799.6,111.9L803.7,116.7L807.7,111.9L814.5,109.2L819.2,114.6"/>
  <path d="M720.0,136.2L726.7,129.5L734.8,125.4"/>
  <path d="M763.2,152.0L769.9,143.0L784.8,139.6L795.6,138.9L806.4,135.6L814.5,129.5L828.0,122.7L840.0,118.7"/>
  <path d="M823.9,152.0L828.0,137.6L834.7,132.2L840.0,130.8"/>
  <path d="M480.0,184.4L485.4,179.0L489.4,181.0L494.8,172.2L504.3,165.5L507.0,158.7L505.6,152.0"/>
  <path d="M489.4,181.0L492.1,189.8L500.2,206.0L501.6,216.8L498.9,222.2L500.2,233.0L498.9,242.0"/>
  <path d="M492.1,189.8L501.6,187.1L512.4,188.4L515.8,185.7"/>
  <path d="M515.8,177.6L524.5,175.6L528.6,185.7L536.7,183.0L544.8,181.0L547.5,185.7L559.6,183.7L558.3,191.1L565.0,192.5L567.7,184.4L574.5,173.6L579.9,173.6L585.3,178.3L586.6,187.1L590.7,197.9L594.7,210.0L600.0,216.8"/>
  <path d="M513.7,166.2L515.1,161.4L527.2,158.7L527.2,152.0"/>
  <path d="M602.7,172.9L609.4,169.5L614.8,160.1L616.2,157.4"/>
  <path d="M602.7,172.9L605.4,187.1L604.0,196.5L606.7,211.4L608.1,220.8L617.5,223.5L622.9,222.2"/>
  <path d="M608.1,191.1L617.5,195.2L628.3,193.2L640.5,193.8L645.9,196.5L648.6,203.3L651.3,207.3L659.4,210.7L663.4,210.0L662.1,203.3L666.1,199.2"/>
  <path d="M663.4,210.0L664.8,215.4L659.4,220.8L654.0,228.9L645.9,230.3L639.1,233.0L631.0,230.3L622.9,222.2"/>
  <path d="M600.0,235.7L605.4,233.0L617.5,223.5"/>
  <path d="M670.2,197.2L675.6,193.8L686.4,191.1L694.5,185.7L702.6,183.0L712.0,179.0L714.7,172.2L720.0,168.2"/>
  <path d="M686.4,196.5L689.1,195.2L698.5,195.9L706.6,195.2L720.0,194.5"/>
  <path d="M764.5,152.0L765.9,157.4L771.3,160.1L767.2,166.8L769.9,172.2L766.6,176.3L774.0,180.3L779.4,179.0L788.8,184.4L794.2,184.4L801.0,189.1L811.8,184.4L819.9,177.6L825.3,166.8L826.6,156.0L819.9,155.4L814.5,152.0"/>
  <path d="M798.3,152.0L791.5,158.7L787.5,165.5L790.2,176.3L794.2,184.4"/>
  <path d="M763.2,222.2L763.9,233.0L763.2,242.0"/>
  <path d="M504.3,252.0L505.6,256.0L515.1,258.1L513.1,265.5L509.0,276.3L498.9,282.4L501.6,288.4L496.9,293.8L500.2,306.0L513.7,315.4L520.5,322.9"/>
  <path d="M557.6,276.3L561.0,268.2L569.1,266.8L570.4,261.4L579.9,260.1L588.0,258.7"/>
  <path d="M547.5,288.4L543.4,285.7L539.4,289.8L539.4,296.5L534.0,306.0L536.7,311.4L536.0,319.5L543.4,322.2L552.9,330.3L561.0,327.6L571.8,324.9L579.9,330.3L588.0,327.6L600.0,326.2"/>
  <path d="M582.6,276.3L592.0,279.0L590.7,296.5L592.0,310.0L600.0,312.7"/>
  <path d="M616.9,287.8L621.6,283.0L632.4,280.3L636.4,275.6"/>
  <path d="M616.9,287.8L620.2,292.5L618.9,300.6L625.6,303.3L620.2,316.8L622.9,324.9L613.5,327.6L614.8,342.0"/>
  <path d="M600.0,299.2L608.1,297.9L610.8,300.6L618.9,300.6"/>
  <path d="M648.6,272.9L663.4,273.6L666.1,281.7L679.6,275.6L683.7,277.6L689.1,276.3L695.8,284.4L696.5,291.1L702.6,288.4L713.4,283.0L720.0,269.5"/>
  <path d="M713.4,283.0L716.1,292.5L706.6,300.6L699.9,306.0L701.2,312.7L691.8,319.5L689.1,328.9L679.6,333.0L672.9,338.4L675.6,342.0"/>
  <path d="M701.2,312.7L709.3,315.4L720.0,314.1"/>
  <path d="M773.3,252.0L775.3,260.1L773.3,273.6L775.3,282.4L767.2,292.5L756.4,293.8L748.3,301.3L744.3,296.5L736.2,295.9L733.5,301.9L728.1,310.0L720.0,314.1"/>
  <path d="M775.3,282.4L783.4,285.7L801.0,287.8L811.8,291.8L815.8,293.8L818.5,288.4L822.6,284.4L821.2,279.0L828.0,269.5L834.7,264.8"/>
  <path d="M820.5,240.0L825.0,250.8L834.0,263.4"/>
  <path d="M780.0,285.0L798.0,286.8L816.0,294.0L821.4,285.0L825.0,272.4L834.0,264.3"/>
  <path d="M790.0,172.5L794.5,184.5L802.0,189.0L812.5,184.5L823.0,177.0L826.0,165.0L826.0,150.0"/>
  <path d="M812.5,150.0L815.5,154.5L826.0,156.0"/>
  <path d="M847.1,87.8L849.3,84.5L853.8,83.3L854.9,80.0L857.8,77.7"/>
  <path d="M810.0,129.4L816.7,124.9L823.5,128.3L830.2,122.7L839.2,120.4L843.7,122.7"/>
  <path d="M830.2,136.9L834.7,130.5L843.7,129.4L848.2,131.7"/>
</g>
<g fill="none" stroke="#fffdfa" stroke-width="2.4" stroke-linejoin="round" stroke-linecap="round" opacity=".78">
  <path d="M523.2,92.4L534.0,91.0L544.8,87.0"/>
  <path d="M559.0,64.0L561.7,72.1"/>
  <path d="M577.2,74.1L583.9,70.1L590.7,71.4"/>
  <path d="M536.7,140.3L543.4,143.7L550.2,142.6"/>
  <path d="M484.0,119.4L489.4,120.0"/>
  <path d="M566.4,120.0L567.7,124.8"/>
  <path d="M652.0,63.3L659.4,71.4L662.8,79.5L662.1,89.0L664.1,101.1"/>
  <path d="M632.4,144.3L635.1,140.3L639.1,137.6"/>
  <path d="M814.5,119.4L811.8,114.0L808.4,109.9L807.1,107.9L805.7,101.1"/>
  <path d="M736.2,125.4L740.2,137.6L740.2,152.0"/>
  <path d="M772.0,132.9L773.3,130.8"/>
  <path d="M796.3,140.3L798.3,143.7L803.0,144.3"/>
  <path d="M648.6,159.4L654.0,162.8L662.1,168.2L670.2,172.2L681.0,172.9L689.1,172.9L691.8,170.2"/>
  <path d="M691.8,184.4L697.2,186.4L699.9,191.1L708.0,190.5L714.7,188.4"/>
  <path d="M602.7,157.4L606.1,158.1"/>
  <path d="M740.2,152.0L741.6,161.4L742.9,170.9L747.0,176.3L752.4,181.7"/>
  <path d="M586.6,264.8L581.2,270.9L579.2,281.7L574.5,293.8L571.8,297.9L563.7,304.6L559.6,311.4L556.9,322.2L550.2,330.3L540.7,333.0L531.3,334.3L520.5,341.1L517.8,345.1"/>
  <path d="M807.0,309.3L808.8,319.2L812.4,333.6L814.2,346.2"/>
  <path d="M649.4,258.1L648.4,260.1L647.3,261.7"/>
  <path d="M480.0,97.4L504.3,95.5L513.7,98.2L520.5,98.4L525.9,103.8L532.6,109.2L540.7,111.3L547.5,117.3L552.9,122.7L557.6,122.1L563.7,124.8L574.5,125.4L579.9,122.7L586.6,122.1L592.0,125.4L600.0,132.2"/>
  <path d="M574.5,125.4L571.8,130.8L566.4,138.9L559.6,141.6L550.2,143.0L544.8,147.0L539.4,152.0"/>
  <path d="M480.0,117.3L484.7,120.0L486.1,129.5L486.7,140.3L489.4,148.4L490.1,152.0"/>
  <path d="M632.4,101.1L630.4,105.2L633.1,113.3L639.1,121.4L640.5,125.4L639.1,130.8L640.5,136.9"/>
  <path d="M620.2,90.3L629.0,93.7"/>
  <path d="M600.0,132.2L610.8,136.2L620.2,132.2L632.4,130.2L639.1,132.2L640.5,136.9L647.2,136.9L654.0,133.5L659.4,132.2L664.8,126.8L666.8,118.7L664.8,111.9L662.8,107.9"/>
  <path d="M683.7,101.1L691.8,94.4L702.6,90.3L713.4,84.9L720.0,84.3"/>
  <path d="M683.7,101.1L694.5,101.1L703.9,103.8L710.7,107.9L720.0,116.0"/>
  <path d="M610.8,136.2L608.1,143.0L609.4,152.0"/>
  <path d="M610.8,136.2L622.9,141.6"/>
  <path d="M651.3,135.6L660.7,143.0L670.2,151.1"/>
  <path d="M720.0,84.3L725.4,83.6L733.5,78.2L744.3,76.2L752.4,72.8L755.8,67.4L758.5,63.3"/>
  <path d="M725.4,83.6L730.1,87.0"/>
  <path d="M720.0,116.0L725.4,119.4L734.8,124.1L747.0,121.4L753.7,124.1L760.5,128.1L772.0,132.9L776.7,132.9L786.1,137.6L796.9,132.9L806.4,128.8L811.8,125.4L814.5,119.4L822.6,120.0L832.0,118.7L840.0,116.7L849.6,115.3L855.0,121.4"/>
  <path d="M480.0,167.5L488.1,166.2L502.9,165.5L509.0,168.9L513.7,166.2L520.5,162.8L528.6,163.5L534.0,157.4L539.4,152.0"/>
  <path d="M485.4,165.5L486.7,161.4L491.5,157.4L490.8,152.0"/>
  <path d="M509.0,168.9L512.4,177.6L515.8,185.7L519.8,194.5L525.9,197.2L534.0,198.6L542.1,204.0L550.2,206.0L555.6,210.0L561.0,215.4L567.5,219.5L573.1,225.6L577.2,233.0L583.9,242.0"/>
  <path d="M600.0,222.9L593.4,228.9L588.0,234.3L583.9,242.0"/>
  <path d="M609.4,152.0L610.8,156.0L616.2,157.4L628.3,156.7L629.7,152.0"/>
  <path d="M616.2,157.4L610.8,169.5L612.1,179.0L616.2,187.1L618.9,195.9L613.5,201.9L610.8,208.7L610.8,214.1L605.4,218.1L600.0,222.2"/>
  <path d="M628.3,156.7L633.7,166.8L637.8,176.3L644.5,184.4L651.3,189.8L659.4,195.2L666.1,199.2L672.9,200.6L683.7,199.2L691.8,201.9L697.2,203.3L701.2,200.6L708.0,201.9L720.0,204.0"/>
  <path d="M618.9,195.9L620.2,201.9L627.0,200.6L635.1,195.9"/>
  <path d="M610.8,214.1L614.8,222.2L616.2,228.9L621.6,234.3L628.3,241.1"/>
  <path d="M689.1,172.9L691.8,178.3L691.8,184.4L698.5,185.7"/>
  <path d="M714.7,188.4L718.8,192.0L720.4,199.2"/>
  <path d="M671.5,152.0L673.6,155.4"/>
  <path d="M720.0,202.6L728.1,208.7L736.2,216.8L750.4,222.2L763.2,224.9L776.7,225.6L780.1,225.0"/>
  <path d="M583.9,249.3L583.9,252.0L586.0,257.4L586.6,264.1L592.0,264.8"/>
  <path d="M605.4,266.8L616.2,268.2L625.6,268.9L631.0,270.9L636.4,275.6L640.5,281.7L644.5,289.8L649.9,292.5L652.0,299.2L654.0,308.7L658.0,315.4L658.7,324.9L654.0,331.6L647.2,342.0L645.9,345.1"/>
  <path d="M780.0,225.1L792.6,226.0L799.8,234.6L810.6,243.6L817.8,247.2L826.8,253.5L834.0,263.4L837.6,274.2L836.7,283.2L832.2,294.0L826.8,301.2L808.8,308.4"/>
  <path d="M817.8,247.2L821.4,240.0L827.7,232.8L829.5,222.0"/>
  <path d="M857.5,150.0L853.0,156.0L850.0,163.5"/>
  <path d="M850.7,190.5L856.0,193.5L859.0,195.0"/>
  <path d="M835.0,177.0L829.3,189.0L824.8,202.5L827.8,213.0L829.3,222.0"/>
  <path d="M628.3,241.1L635.3,245.6L642.3,244.1L649.4,248.1L650.9,252.1L649.4,258.1L647.9,261.2"/>
  <path d="M583.1,240.1L584.1,247.1L586.1,256.1L586.6,262.2L588.1,264.7L592.6,264.7"/>
</g>
<g fill="none" stroke="#f2cc6c" stroke-width="1" stroke-linejoin="round" stroke-linecap="round">
  <path d="M523.2,92.4L534.0,91.0L544.8,87.0"/>
  <path d="M559.0,64.0L561.7,72.1"/>
  <path d="M577.2,74.1L583.9,70.1L590.7,71.4"/>
  <path d="M536.7,140.3L543.4,143.7L550.2,142.6"/>
  <path d="M484.0,119.4L489.4,120.0"/>
  <path d="M566.4,120.0L567.7,124.8"/>
  <path d="M652.0,63.3L659.4,71.4L662.8,79.5L662.1,89.0L664.1,101.1"/>
  <path d="M632.4,144.3L635.1,140.3L639.1,137.6"/>
  <path d="M814.5,119.4L811.8,114.0L808.4,109.9L807.1,107.9L805.7,101.1"/>
  <path d="M736.2,125.4L740.2,137.6L740.2,152.0"/>
  <path d="M772.0,132.9L773.3,130.8"/>
  <path d="M796.3,140.3L798.3,143.7L803.0,144.3"/>
  <path d="M648.6,159.4L654.0,162.8L662.1,168.2L670.2,172.2L681.0,172.9L689.1,172.9L691.8,170.2"/>
  <path d="M691.8,184.4L697.2,186.4L699.9,191.1L708.0,190.5L714.7,188.4"/>
  <path d="M602.7,157.4L606.1,158.1"/>
  <path d="M740.2,152.0L741.6,161.4L742.9,170.9L747.0,176.3L752.4,181.7"/>
  <path d="M586.6,264.8L581.2,270.9L579.2,281.7L574.5,293.8L571.8,297.9L563.7,304.6L559.6,311.4L556.9,322.2L550.2,330.3L540.7,333.0L531.3,334.3L520.5,341.1L517.8,345.1"/>
  <path d="M807.0,309.3L808.8,319.2L812.4,333.6L814.2,346.2"/>
  <path d="M649.4,258.1L648.4,260.1L647.3,261.7"/>
</g>
<g fill="none" stroke="#f19a72" stroke-width=".98" stroke-linejoin="round" stroke-linecap="round">
  <path d="M480.0,97.4L504.3,95.5L513.7,98.2L520.5,98.4L525.9,103.8L532.6,109.2L540.7,111.3L547.5,117.3L552.9,122.7L557.6,122.1L563.7,124.8L574.5,125.4L579.9,122.7L586.6,122.1L592.0,125.4L600.0,132.2"/>
  <path d="M574.5,125.4L571.8,130.8L566.4,138.9L559.6,141.6L550.2,143.0L544.8,147.0L539.4,152.0"/>
  <path d="M480.0,117.3L484.7,120.0L486.1,129.5L486.7,140.3L489.4,148.4L490.1,152.0"/>
  <path d="M632.4,101.1L630.4,105.2L633.1,113.3L639.1,121.4L640.5,125.4L639.1,130.8L640.5,136.9"/>
  <path d="M620.2,90.3L629.0,93.7"/>
  <path d="M600.0,132.2L610.8,136.2L620.2,132.2L632.4,130.2L639.1,132.2L640.5,136.9L647.2,136.9L654.0,133.5L659.4,132.2L664.8,126.8L666.8,118.7L664.8,111.9L662.8,107.9"/>
  <path d="M683.7,101.1L691.8,94.4L702.6,90.3L713.4,84.9L720.0,84.3"/>
  <path d="M683.7,101.1L694.5,101.1L703.9,103.8L710.7,107.9L720.0,116.0"/>
  <path d="M610.8,136.2L608.1,143.0L609.4,152.0"/>
  <path d="M610.8,136.2L622.9,141.6"/>
  <path d="M651.3,135.6L660.7,143.0L670.2,151.1"/>
  <path d="M720.0,84.3L725.4,83.6L733.5,78.2L744.3,76.2L752.4,72.8L755.8,67.4L758.5,63.3"/>
  <path d="M725.4,83.6L730.1,87.0"/>
  <path d="M720.0,116.0L725.4,119.4L734.8,124.1L747.0,121.4L753.7,124.1L760.5,128.1L772.0,132.9L776.7,132.9L786.1,137.6L796.9,132.9L806.4,128.8L811.8,125.4L814.5,119.4L822.6,120.0L832.0,118.7L840.0,116.7L849.6,115.3L855.0,121.4"/>
  <path d="M480.0,167.5L488.1,166.2L502.9,165.5L509.0,168.9L513.7,166.2L520.5,162.8L528.6,163.5L534.0,157.4L539.4,152.0"/>
  <path d="M485.4,165.5L486.7,161.4L491.5,157.4L490.8,152.0"/>
  <path d="M509.0,168.9L512.4,177.6L515.8,185.7L519.8,194.5L525.9,197.2L534.0,198.6L542.1,204.0L550.2,206.0L555.6,210.0L561.0,215.4L567.5,219.5L573.1,225.6L577.2,233.0L583.9,242.0"/>
  <path d="M600.0,222.9L593.4,228.9L588.0,234.3L583.9,242.0"/>
  <path d="M609.4,152.0L610.8,156.0L616.2,157.4L628.3,156.7L629.7,152.0"/>
  <path d="M616.2,157.4L610.8,169.5L612.1,179.0L616.2,187.1L618.9,195.9L613.5,201.9L610.8,208.7L610.8,214.1L605.4,218.1L600.0,222.2"/>
  <path d="M628.3,156.7L633.7,166.8L637.8,176.3L644.5,184.4L651.3,189.8L659.4,195.2L666.1,199.2L672.9,200.6L683.7,199.2L691.8,201.9L697.2,203.3L701.2,200.6L708.0,201.9L720.0,204.0"/>
  <path d="M618.9,195.9L620.2,201.9L627.0,200.6L635.1,195.9"/>
  <path d="M610.8,214.1L614.8,222.2L616.2,228.9L621.6,234.3L628.3,241.1"/>
  <path d="M689.1,172.9L691.8,178.3L691.8,184.4L698.5,185.7"/>
  <path d="M714.7,188.4L718.8,192.0L720.4,199.2"/>
  <path d="M671.5,152.0L673.6,155.4"/>
  <path d="M720.0,202.6L728.1,208.7L736.2,216.8L750.4,222.2L763.2,224.9L776.7,225.6L780.1,225.0"/>
  <path d="M583.9,249.3L583.9,252.0L586.0,257.4L586.6,264.1L592.0,264.8"/>
  <path d="M605.4,266.8L616.2,268.2L625.6,268.9L631.0,270.9L636.4,275.6L640.5,281.7L644.5,289.8L649.9,292.5L652.0,299.2L654.0,308.7L658.0,315.4L658.7,324.9L654.0,331.6L647.2,342.0L645.9,345.1"/>
  <path d="M780.0,225.1L792.6,226.0L799.8,234.6L810.6,243.6L817.8,247.2L826.8,253.5L834.0,263.4L837.6,274.2L836.7,283.2L832.2,294.0L826.8,301.2L808.8,308.4"/>
  <path d="M817.8,247.2L821.4,240.0L827.7,232.8L829.5,222.0"/>
  <path d="M857.5,150.0L853.0,156.0L850.0,163.5"/>
  <path d="M850.7,190.5L856.0,193.5L859.0,195.0"/>
  <path d="M835.0,177.0L829.3,189.0L824.8,202.5L827.8,213.0L829.3,222.0"/>
  <path d="M628.3,241.1L635.3,245.6L642.3,244.1L649.4,248.1L650.9,252.1L649.4,258.1L647.9,261.2"/>
  <path d="M583.1,240.1L584.1,247.1L586.1,256.1L586.6,262.2L588.1,264.7L592.6,264.7"/>
</g>
<g fill="none" stroke="#7e8aa6" stroke-width="1.15" stroke-linejoin="round">
  <path d="M480.0,94.4L484.0,91.0L488.1,88.3L496.2,84.3L503.6,85.6L506.3,89.0L507.7,95.1L513.1,97.4L516.4,93.7L524.5,93.7L534.0,94.4L543.4,91.0L547.5,85.6L553.6,83.6L558.3,82.2L566.4,74.8L570.4,78.2L575.8,76.2L582.6,77.5L584.6,83.6L588.0,87.6L594.7,89.7L600.0,90.3"/>
  <path d="M600.0,91.0L605.4,87.6L612.1,89.7L623.6,86.3L622.3,83.6L617.5,82.2L617.5,78.2L627.0,74.1L629.0,70.8L636.4,73.5L639.8,76.8L639.1,80.9L643.2,80.2L646.6,71.4L648.6,68.7L650.6,66.0L649.3,63.3"/>
  <path d="M611.5,63.3L618.9,66.0L620.2,68.1L632.4,64.0"/>
  <path d="M829.5,222.0L827.7,232.8L820.5,240.0L834.0,239.1L839.4,242.7L847.5,240.0L848.4,233.7L852.0,229.2L851.1,222.0"/>
  <path d="M847.5,240.0L853.8,241.8L859.2,240.0"/>
  <path d="M850.0,150.0L845.5,156.0L842.5,165.0L833.5,177.0L827.5,189.0L823.0,202.5L826.7,213.0L827.5,222.0"/>
  <path d="M847.7,240.0L848.5,234.0L852.2,231.0L850.7,225.0L854.5,220.5L856.7,210.0"/>
  <path d="M841.5,115.9L846.0,121.6L847.1,124.9"/>
  <path d="M854.9,128.3L856.1,133.9L854.9,136.9"/>
  <path d="M761.6,64 L778.4,64 L814.4,82.4 L828.8,99.8 L833.6,99.8 M851,105.2 L858,104"/>
</g>
<!-- shields -->
<g>
  <path d="M846.6,119.6 L855.8,119.6 L857.4,123.4 L855.8,127.2 L846.6,127.2 L845,123.4Z" fill="#d22630"/>
  <path d="M562.6,215.6 L572,215.6 L573.6,219.7 L572,223.8 L562.6,223.8 L561,219.7Z" fill="#d22630"/>
  <path d="M593.8,263.8 L603.6,263.8 L605.2,267.9 L603.6,272 L593.8,272 L592.2,267.9Z" fill="#d22630"/>
  <path d="M737.6,216.3 L747.6,216.3 L749.4,220.3 L747.6,224.3 L737.6,224.3 L735.8,220.3Z" fill="#d22630"/>
  <g font-size="6" font-weight="bold" fill="#fff" text-anchor="middle">
    <text x="851.2" y="125.6">1</text><text x="567.3" y="221.9">2</text><text x="598.7" y="270.1">2</text><text x="742.6" y="222.5">3</text>
  </g>
</g>

<!-- labels -->
<g fill="#505050" stroke="#f5f1ea" stroke-width="1.5" paint-order="stroke" stroke-linejoin="round">
  <text x="649.8" y="106.3" font-size="8.1" letter-spacing=".5">Winterthur</text>
  <text x="636.4" y="145" font-size="9.4" letter-spacing=".6" fill="#444">Zurich</text>
  <text x="781.8" y="128.4" font-size="8" letter-spacing=".33">St. Gallen</text>
  <text x="571" y="238.9" font-size="8" letter-spacing=".3">Lucerne</text>
  <text x="642.9" y="248.1" font-size="7.8" letter-spacing="0">Schwyz</text>
  <text x="642.1" y="288.5" font-size="7.8" letter-spacing=".12">Altdorf</text>
  <text x="821.8" y="296.3" font-size="8.2" letter-spacing=".1">Chur</text>
  <text x="481.4" y="88.6" font-size="7.8" letter-spacing=".25" fill="#666">felden</text>
</g>
<g fill="#141414" stroke="#f5f1ea" stroke-width="2" paint-order="stroke" stroke-linejoin="round">
  <text x="538" y="320.3" font-size="12.4" letter-spacing=".36">Switzerland</text>
  <text x="800.2" y="217.3" font-size="11.4" letter-spacing=".3">Liecht</text>
  <text x="853.4" y="217.3" font-size="11.4" letter-spacing=".3">te</text>
</g>
<g fill="#222">
  <circle cx="670.6" cy="110.6" r="1.1"/><circle cx="633.6" cy="148" r="1.2"/><circle cx="801" cy="133.2" r="1.1"/>
  <circle cx="586" cy="242.6" r="1.1"/><circle cx="656" cy="252" r="1"/><circle cx="653.6" cy="293" r="1"/><circle cx="830.6" cy="300.6" r="1.1"/>
  <circle cx="760.6" cy="63.6" r="1"/><circle cx="822" cy="66.4" r=".9"/>
</g>

<!-- marker -->
<path d="M667.5,198.6 C664.5,194.6 661.6,190.8 661.6,187 A5.9,5.9 0 1 1 673.4,187 C673.4,190.8 670.5,194.6 667.5,198.6Z" fill="#7fd0f2" fill-opacity=".35" stroke="#111" stroke-width="1.9" stroke-linejoin="round"/>
<circle cx="667.6" cy="186.7" r="2" fill="#111"/>

<!-- controls -->
<g>
  <rect x="833.2" y="97.2" width="17.8" height="17.8" rx="2.2" fill="#fff" stroke="#d9d9d9" stroke-width=".8"/>
  <g stroke="#1d1d1d" stroke-width="1.2" fill="#1d1d1d" stroke-linejoin="round">
    <path d="M838.6,102.8 L845.6,109.8 M845.6,102.8 L838.6,109.8" fill="none" stroke-width="1.3"/>
    <path d="M836.6,100.8 H840.4 L836.6,104.6Z M847.6,100.8 V104.6 L843.8,100.8Z M847.6,111.8 H843.8 L847.6,108Z M836.6,111.8 V108 L840.4,111.8Z" stroke-width=".6"/>
  </g>
  <rect x="833.2" y="161.4" width="17.8" height="49.6" rx="2.2" fill="#fff" stroke="#d9d9d9" stroke-width=".8"/>
  <text x="833.8" y="217.2" font-size="11.4" letter-spacing=".9" fill="#141414" fill-opacity=".32">ens</text>
  <path d="M833.2,179.6 H851 M833.2,198.4 H851" stroke="#ddd" stroke-width=".8"/>
  <path d="M838.4,170.4 H846 M842.2,166.6 V174.2" stroke="#1d1d1d" stroke-width="1.5"/>
  <path d="M838.4,189 H846" stroke="#1d1d1d" stroke-width="1.5"/>
  <path d="M842.2,202.2 L844.4,206.4 H840Z" fill="#2b2b2b"/>
  <path d="M842.2,212.4 L844.4,208.6 H840Z" fill="#bdbdbd"/>
</g>

<!-- streets dropdown -->
<rect x="752.6" y="314.6" width="99.6" height="14.8" rx="1.2" fill="#f3f0ea" fill-opacity=".22" stroke="#bdb9b0" stroke-width=".8"/>
<text x="756.8" y="325.6" font-size="9.2" letter-spacing="1" fill="#3a3a3a">Streets</text>
<path d="M839.8,321 L843.2,324.2 L846.6,321" fill="none" stroke="#666" stroke-width=".9"/>

<!-- mapbox logo -->
<g>
  <circle cx="491.6" cy="331" r="6" fill="#fff" stroke="#8c8c8c" stroke-width=".9"/>
  <path d="M488.6,334 L489.4,330.4 A3.3,3.3 0 1 1 492.2,333.2Z" fill="#9a9a9a"/>
  <circle cx="492.4" cy="330" r="1.2" fill="#fff"/>
  <text x="500.2" y="334.6" font-size="9.9" font-weight="bold" fill="#fff" stroke="#8a8a8a" stroke-width="1.4" paint-order="stroke" letter-spacing=".3">mapbox</text>
</g>
<path d="M851.4,339.8 H854.8 V336.6" stroke="#444" stroke-width="1" fill="none"/>
</svg>

</div>
<div class="t b" style="left:491.3px;top:71.1px;font-size:9px;color:#1c1c1c;letter-spacing:.17px">Map View</div>
<svg class="abs" style="left:837.8px;top:69.2px" width="12" height="12" viewBox="0 0 12 12"><path d="M2.2 2.2 L9.2 9.2 M9.2 2.2 L2.2 9.2" stroke="#1a1a1a" stroke-width="1.1" fill="none"/></svg>

<!-- ============ Data View ============ -->
<div class="panel" style="left:861px;top:62px;width:124.7px;height:281px"></div>
<div class="hl" style="left:861px;top:85.6px;width:124.7px"></div>
<div class="t b" style="left:872px;top:71.1px;font-size:9px;color:#1c1c1c;letter-spacing:.17px">Data View</div>
<svg class="abs" style="left:964.2px;top:69px" width="12" height="12" viewBox="0 0 12 12"><path d="M2.2 2.2 L9.2 9.2 M9.2 2.2 L2.2 9.2" stroke="#1a1a1a" stroke-width="1.1" fill="none"/></svg>
<div class="abs" style="left:868.4px;top:94px;width:116px;height:247.5px;overflow:hidden">
<svg width="116" height="247.5" viewBox="868.4 94 116 247.5" style="position:absolute;left:0;top:0">
<text x="868.8" y="100.80" font-size="7.7" font-weight="bold" fill="#2a2a2a" letter-spacing=".14">Fix mode</text>
<text x="868.8" y="109.90" font-size="8.9" fill="#747474" letter-spacing=".5">3D-fix</text>
<text x="868.8" y="118.53" font-size="7.7" font-weight="bold" fill="#2a2a2a" letter-spacing=".14">TTFF</text>
<text x="868.8" y="127.63" font-size="8.9" fill="#747474" letter-spacing=".5">56.863 s</text>
<text x="868.8" y="136.26" font-size="7.7" font-weight="bold" fill="#2a2a2a" letter-spacing=".14">Longitude</text>
<text x="868.8" y="145.36" font-size="8.9" fill="#747474" letter-spacing=".5">8.7194677°</text>
<text x="868.8" y="153.99" font-size="7.7" font-weight="bold" fill="#2a2a2a" letter-spacing=".14">Latitude</text>
<text x="868.8" y="163.09" font-size="8.9" fill="#747474" letter-spacing=".5">47.1889988°</text>
<text x="868.8" y="171.72" font-size="7.7" font-weight="bold" fill="#2a2a2a" letter-spacing=".14">Altitude</text>
<text x="868.8" y="180.82" font-size="8.9" fill="#747474" letter-spacing=".5">552.400 m</text>
<text x="868.8" y="189.45" font-size="7.7" font-weight="bold" fill="#2a2a2a" letter-spacing=".14">Velocity</text>
<text x="868.8" y="198.55" font-size="8.9" fill="#747474" letter-spacing=".5">0.014 m/s</text>
<text x="868.8" y="207.18" font-size="7.7" font-weight="bold" fill="#2a2a2a" letter-spacing=".14">UTC time</text>
<text x="868.8" y="216.28" font-size="8.9" fill="#747474" letter-spacing=".5">07:09:33</text>
<text x="868.8" y="224.91" font-size="7.7" font-weight="bold" fill="#2a2a2a" letter-spacing=".14">3D acc.(0-50)</text>
<text x="868.8" y="234.01" font-size="8.9" fill="#747474" letter-spacing=".5">2.443</text>
<text x="868.8" y="242.64" font-size="7.7" font-weight="bold" fill="#2a2a2a" letter-spacing=".14">2D acc.(0-50)</text>
<text x="868.8" y="251.74" font-size="8.9" fill="#747474" letter-spacing=".5">1.635</text>
<text x="868.8" y="260.37" font-size="7.7" font-weight="bold" fill="#2a2a2a" letter-spacing=".14">PDOP(0-10)</text>
<text x="868.8" y="269.47" font-size="8.9" fill="#747474" letter-spacing=".5">1.210</text>
<text x="868.8" y="278.10" font-size="7.7" font-weight="bold" fill="#2a2a2a" letter-spacing=".14">HDOP(0-10)</text>
<text x="868.8" y="287.20" font-size="8.9" fill="#747474" letter-spacing=".5">0.630</text>
<text x="868.8" y="295.83" font-size="7.7" font-weight="bold" fill="#2a2a2a" letter-spacing=".14">Used in navigation</text>
<text x="868.8" y="304.93" font-size="8.9" fill="#747474" letter-spacing=".5">23 / 38</text>
<text x="868.8" y="313.56" font-size="7.7" font-weight="bold" fill="#2a2a2a" letter-spacing=".14">Not used in navigation</text>
<text x="868.8" y="322.66" font-size="8.9" fill="#747474" letter-spacing=".5">5 / 38</text>
<text x="868.8" y="331.29" font-size="7.7" font-weight="bold" fill="#2a2a2a" letter-spacing=".14">Not tracked</text>
<text x="868.8" y="340.39" font-size="8.9" fill="#747474" letter-spacing=".5">10 / 38</text>
</svg>
</div>

<!-- ============ Satellite Signal View ============ -->
<div class="panel" style="left:34px;top:346px;width:951.7px;height:282px"></div>
<div class="hl" style="left:34px;top:369.8px;width:951.7px"></div>
<div class="t b" style="left:45.6px;top:355.3px;font-size:9px;color:#1c1c1c;letter-spacing:.17px">Satellite Signal View</div>
<svg class="abs" style="left:964.7px;top:354px" width="12" height="12" viewBox="0 0 12 12"><path d="M2.2 2.2 L9.2 9.2 M9.2 2.2 L2.2 9.2" stroke="#1a1a1a" stroke-width="1.1" fill="none"/></svg>
<svg class="abs" style="left:36px;top:372px" width="948" height="254" viewBox="36 372 948 254">
<line x1="115.0" y1="381.5" x2="115.0" y2="564.4" stroke="#ededed" stroke-width="1"/>
<line x1="115.0" y1="564.4" x2="115.0" y2="569.9" stroke="#ededed" stroke-width="1"/>
<line x1="147.0" y1="381.5" x2="147.0" y2="564.4" stroke="#ededed" stroke-width="1"/>
<line x1="147.0" y1="564.4" x2="147.0" y2="569.9" stroke="#ededed" stroke-width="1"/>
<line x1="179.1" y1="381.5" x2="179.1" y2="564.4" stroke="#ededed" stroke-width="1"/>
<line x1="179.1" y1="564.4" x2="179.1" y2="569.9" stroke="#ededed" stroke-width="1"/>
<line x1="211.1" y1="381.5" x2="211.1" y2="564.4" stroke="#ededed" stroke-width="1"/>
<line x1="211.1" y1="564.4" x2="211.1" y2="569.9" stroke="#ededed" stroke-width="1"/>
<line x1="243.1" y1="381.5" x2="243.1" y2="564.4" stroke="#ededed" stroke-width="1"/>
<line x1="243.1" y1="564.4" x2="243.1" y2="569.9" stroke="#ededed" stroke-width="1"/>
<line x1="275.1" y1="381.5" x2="275.1" y2="564.4" stroke="#ededed" stroke-width="1"/>
<line x1="275.1" y1="564.4" x2="275.1" y2="569.9" stroke="#ededed" stroke-width="1"/>
<line x1="307.1" y1="381.5" x2="307.1" y2="564.4" stroke="#ededed" stroke-width="1"/>
<line x1="307.1" y1="564.4" x2="307.1" y2="569.9" stroke="#ededed" stroke-width="1"/>
<line x1="339.2" y1="381.5" x2="339.2" y2="564.4" stroke="#ededed" stroke-width="1"/>
<line x1="339.2" y1="564.4" x2="339.2" y2="569.9" stroke="#ededed" stroke-width="1"/>
<line x1="371.2" y1="381.5" x2="371.2" y2="564.4" stroke="#ededed" stroke-width="1"/>
<line x1="371.2" y1="564.4" x2="371.2" y2="569.9" stroke="#ededed" stroke-width="1"/>
<line x1="403.2" y1="381.5" x2="403.2" y2="564.4" stroke="#ededed" stroke-width="1"/>
<line x1="403.2" y1="564.4" x2="403.2" y2="569.9" stroke="#ededed" stroke-width="1"/>
<line x1="435.2" y1="381.5" x2="435.2" y2="564.4" stroke="#ededed" stroke-width="1"/>
<line x1="435.2" y1="564.4" x2="435.2" y2="569.9" stroke="#ededed" stroke-width="1"/>
<line x1="467.2" y1="381.5" x2="467.2" y2="564.4" stroke="#ededed" stroke-width="1"/>
<line x1="467.2" y1="564.4" x2="467.2" y2="569.9" stroke="#ededed" stroke-width="1"/>
<line x1="499.3" y1="381.5" x2="499.3" y2="564.4" stroke="#ededed" stroke-width="1"/>
<line x1="499.3" y1="564.4" x2="499.3" y2="569.9" stroke="#ededed" stroke-width="1"/>
<line x1="531.3" y1="381.5" x2="531.3" y2="564.4" stroke="#ededed" stroke-width="1"/>
<line x1="531.3" y1="564.4" x2="531.3" y2="569.9" stroke="#ededed" stroke-width="1"/>
<line x1="563.3" y1="381.5" x2="563.3" y2="564.4" stroke="#ededed" stroke-width="1"/>
<line x1="563.3" y1="564.4" x2="563.3" y2="569.9" stroke="#ededed" stroke-width="1"/>
<line x1="595.3" y1="381.5" x2="595.3" y2="564.4" stroke="#ededed" stroke-width="1"/>
<line x1="595.3" y1="564.4" x2="595.3" y2="569.9" stroke="#ededed" stroke-width="1"/>
<line x1="627.3" y1="381.5" x2="627.3" y2="564.4" stroke="#ededed" stroke-width="1"/>
<line x1="627.3" y1="564.4" x2="627.3" y2="569.9" stroke="#ededed" stroke-width="1"/>
<line x1="659.4" y1="381.5" x2="659.4" y2="564.4" stroke="#ededed" stroke-width="1"/>
<line x1="659.4" y1="564.4" x2="659.4" y2="569.9" stroke="#ededed" stroke-width="1"/>
<line x1="691.4" y1="381.5" x2="691.4" y2="564.4" stroke="#ededed" stroke-width="1"/>
<line x1="691.4" y1="564.4" x2="691.4" y2="569.9" stroke="#ededed" stroke-width="1"/>
<line x1="723.4" y1="381.5" x2="723.4" y2="564.4" stroke="#ededed" stroke-width="1"/>
<line x1="723.4" y1="564.4" x2="723.4" y2="569.9" stroke="#ededed" stroke-width="1"/>
<line x1="755.4" y1="381.5" x2="755.4" y2="564.4" stroke="#ededed" stroke-width="1"/>
<line x1="755.4" y1="564.4" x2="755.4" y2="569.9" stroke="#ededed" stroke-width="1"/>
<line x1="787.4" y1="381.5" x2="787.4" y2="564.4" stroke="#ededed" stroke-width="1"/>
<line x1="787.4" y1="564.4" x2="787.4" y2="569.9" stroke="#ededed" stroke-width="1"/>
<line x1="819.5" y1="381.5" x2="819.5" y2="564.4" stroke="#ededed" stroke-width="1"/>
<line x1="819.5" y1="564.4" x2="819.5" y2="569.9" stroke="#ededed" stroke-width="1"/>
<line x1="851.5" y1="381.5" x2="851.5" y2="564.4" stroke="#ededed" stroke-width="1"/>
<line x1="851.5" y1="564.4" x2="851.5" y2="569.9" stroke="#ededed" stroke-width="1"/>
<line x1="883.5" y1="381.5" x2="883.5" y2="564.4" stroke="#ededed" stroke-width="1"/>
<line x1="883.5" y1="564.4" x2="883.5" y2="569.9" stroke="#ededed" stroke-width="1"/>
<line x1="915.5" y1="381.5" x2="915.5" y2="564.4" stroke="#ededed" stroke-width="1"/>
<line x1="915.5" y1="564.4" x2="915.5" y2="569.9" stroke="#ededed" stroke-width="1"/>
<line x1="947.5" y1="381.5" x2="947.5" y2="564.4" stroke="#ededed" stroke-width="1"/>
<line x1="947.5" y1="564.4" x2="947.5" y2="569.9" stroke="#ededed" stroke-width="1"/>
<line x1="979.6" y1="381.5" x2="979.6" y2="564.4" stroke="#ededed" stroke-width="1"/>
<line x1="979.6" y1="564.4" x2="979.6" y2="569.9" stroke="#ededed" stroke-width="1"/>
<line x1="83.0" y1="531.2" x2="979.6" y2="531.2" stroke="#ededed" stroke-width="1"/>
<line x1="83.0" y1="498.0" x2="979.6" y2="498.0" stroke="#ededed" stroke-width="1"/>
<line x1="83.0" y1="464.7" x2="979.6" y2="464.7" stroke="#ededed" stroke-width="1"/>
<line x1="83.0" y1="431.5" x2="979.6" y2="431.5" stroke="#ededed" stroke-width="1"/>
<line x1="83.0" y1="398.3" x2="979.6" y2="398.3" stroke="#ededed" stroke-width="1"/>
<line x1="77" y1="564.4" x2="83.0" y2="564.4" stroke="#bdbdbd" stroke-width="1"/>
<text x="76.2" y="566.8" text-anchor="end" font-size="8" fill="#7a7a7a" letter-spacing=".1">0dB-Hz</text>
<line x1="77" y1="531.2" x2="83.0" y2="531.2" stroke="#bdbdbd" stroke-width="1"/>
<text x="76.2" y="533.6" text-anchor="end" font-size="8" fill="#7a7a7a" letter-spacing=".1">10dB-Hz</text>
<line x1="77" y1="498.0" x2="83.0" y2="498.0" stroke="#bdbdbd" stroke-width="1"/>
<text x="76.2" y="500.4" text-anchor="end" font-size="8" fill="#7a7a7a" letter-spacing=".1">20dB-Hz</text>
<line x1="77" y1="464.7" x2="83.0" y2="464.7" stroke="#bdbdbd" stroke-width="1"/>
<text x="76.2" y="467.1" text-anchor="end" font-size="8" fill="#7a7a7a" letter-spacing=".1">30dB-Hz</text>
<line x1="77" y1="431.5" x2="83.0" y2="431.5" stroke="#bdbdbd" stroke-width="1"/>
<text x="76.2" y="433.9" text-anchor="end" font-size="8" fill="#7a7a7a" letter-spacing=".1">40dB-Hz</text>
<line x1="77" y1="398.3" x2="83.0" y2="398.3" stroke="#bdbdbd" stroke-width="1"/>
<text x="76.2" y="400.7" text-anchor="end" font-size="8" fill="#7a7a7a" letter-spacing=".1">50dB-Hz</text>
<rect x="87.51" y="448.13" width="23" height="116.27" fill="#efb454"/>
<text x="99.0" y="557" text-anchor="middle" font-size="7.6" fill="#444" fill-opacity="0.9">35</text>
<text x="99.0" y="577.6" text-anchor="middle" font-size="8" font-weight="bold" fill="#4a4a4a" letter-spacing="0.3">G7</text>
<rect x="119.53" y="431.52" width="23" height="132.88" fill="#efb454"/>
<text x="131.0" y="557" text-anchor="middle" font-size="7.6" fill="#444" fill-opacity="0.9">40</text>
<text x="131.0" y="577.6" text-anchor="middle" font-size="8" font-weight="bold" fill="#4a4a4a" letter-spacing="0.3">G8</text>
<rect x="151.55" y="454.77" width="23" height="109.63" fill="#efb454"/>
<text x="163.1" y="557" text-anchor="middle" font-size="7.6" fill="#444" fill-opacity="0.9">33</text>
<text x="163.1" y="577.6" text-anchor="middle" font-size="8" font-weight="bold" fill="#4a4a4a" letter-spacing="0.3">G10</text>
<rect x="183.57" y="408.27" width="23" height="156.13" fill="#efb454"/>
<text x="195.1" y="557" text-anchor="middle" font-size="7.6" fill="#444" fill-opacity="0.9">47</text>
<text x="195.1" y="577.6" text-anchor="middle" font-size="8" font-weight="bold" fill="#4a4a4a" letter-spacing="0.3">G16</text>
<rect x="215.59" y="494.64" width="23" height="69.76" fill="#efb454"/>
<text x="227.1" y="557" text-anchor="middle" font-size="7.6" fill="#444" fill-opacity="0.9">21</text>
<text x="227.1" y="577.6" text-anchor="middle" font-size="8" font-weight="bold" fill="#4a4a4a" letter-spacing="0.3">G18</text>
<rect x="247.61" y="458.10" width="23" height="106.30" fill="#efb454"/>
<text x="259.1" y="557" text-anchor="middle" font-size="7.6" fill="#444" fill-opacity="0.9">32</text>
<text x="259.1" y="577.6" text-anchor="middle" font-size="8" font-weight="bold" fill="#4a4a4a" letter-spacing="0.3">G23</text>
<rect x="279.63" y="421.55" width="23" height="142.85" fill="#efb454"/>
<text x="291.1" y="557" text-anchor="middle" font-size="7.6" fill="#444" fill-opacity="0.9">43</text>
<text x="291.1" y="577.6" text-anchor="middle" font-size="8" font-weight="bold" fill="#4a4a4a" letter-spacing="0.3">G26</text>
<rect x="311.65" y="438.16" width="23" height="126.24" fill="#efb454"/>
<text x="323.1" y="557" text-anchor="middle" font-size="7.6" fill="#444" fill-opacity="0.9">38</text>
<text x="323.1" y="577.6" text-anchor="middle" font-size="8" font-weight="bold" fill="#4a4a4a" letter-spacing="0.3">G27</text>
<rect x="344.27" y="428.80" width="21.80" height="135.60" fill="#bfbfbf" stroke="#1a1aff" stroke-width="1.2"/>
<text x="355.2" y="557" text-anchor="middle" font-size="7.6" fill="#444" fill-opacity="0.9">41</text>
<text x="355.2" y="577.6" text-anchor="middle" font-size="8" font-weight="bold" fill="#4a4a4a" letter-spacing="0.3">S136</text>
<rect x="375.69" y="428.20" width="23" height="136.20" fill="#f0ef6c"/>
<text x="387.2" y="557" text-anchor="middle" font-size="7.6" fill="#444" fill-opacity="0.9">41</text>
<text x="387.2" y="577.6" text-anchor="middle" font-size="8" font-weight="bold" fill="#4a4a4a" letter-spacing="0.3">E11</text>
<rect x="407.71" y="438.16" width="23" height="126.24" fill="#f0ef6c"/>
<text x="419.2" y="557" text-anchor="middle" font-size="7.6" fill="#444" fill-opacity="0.9">38</text>
<text x="419.2" y="577.6" text-anchor="middle" font-size="8" font-weight="bold" fill="#4a4a4a" letter-spacing="0.3">E12</text>
<rect x="439.73" y="414.91" width="23" height="149.49" fill="#f0ef6c"/>
<text x="451.2" y="557" text-anchor="middle" font-size="7.6" fill="#444" fill-opacity="0.9">45</text>
<text x="451.2" y="577.6" text-anchor="middle" font-size="8" font-weight="bold" fill="#4a4a4a" letter-spacing="0.3">E24</text>
<rect x="471.75" y="438.16" width="23" height="126.24" fill="#f0ef6c"/>
<text x="483.2" y="557" text-anchor="middle" font-size="7.6" fill="#444" fill-opacity="0.9">38</text>
<text x="483.2" y="577.6" text-anchor="middle" font-size="8" font-weight="bold" fill="#4a4a4a" letter-spacing="0.3">E25</text>
<rect x="503.77" y="461.42" width="23" height="102.98" fill="#f0ef6c"/>
<text x="515.3" y="557" text-anchor="middle" font-size="7.6" fill="#444" fill-opacity="0.9">31</text>
<text x="515.3" y="577.6" text-anchor="middle" font-size="8" font-weight="bold" fill="#4a4a4a" letter-spacing="0.3">E31</text>
<rect x="536.39" y="495.24" width="21.80" height="69.16" fill="#f0ef6c" stroke="#1a1aff" stroke-width="1.2"/>
<text x="547.3" y="557" text-anchor="middle" font-size="7.6" fill="#444" fill-opacity="0.9">21</text>
<text x="547.3" y="577.6" text-anchor="middle" font-size="8" font-weight="bold" fill="#4a4a4a" letter-spacing="0.3">E33</text>
<rect x="567.81" y="491.32" width="23" height="73.08" fill="#b9de7b"/>
<text x="579.3" y="557" text-anchor="middle" font-size="7.6" fill="#444" fill-opacity="0.9">22</text>
<text x="579.3" y="577.6" text-anchor="middle" font-size="8" font-weight="bold" fill="#4a4a4a" letter-spacing="0.3">B11</text>
<rect x="600.43" y="498.56" width="21.80" height="65.84" fill="#b9de7b" stroke="#1a1aff" stroke-width="1.2"/>
<text x="611.3" y="557" text-anchor="middle" font-size="7.6" fill="#444" fill-opacity="0.9">20</text>
<text x="611.3" y="577.6" text-anchor="middle" font-size="8" font-weight="bold" fill="#4a4a4a" letter-spacing="0.3">B13</text>
<rect x="632.45" y="495.24" width="21.80" height="69.16" fill="#b9de7b" stroke="#1a1aff" stroke-width="1.2"/>
<text x="643.4" y="557" text-anchor="middle" font-size="7.6" fill="#444" fill-opacity="0.9">21</text>
<text x="643.4" y="577.6" text-anchor="middle" font-size="8" font-weight="bold" fill="#4a4a4a" letter-spacing="0.3">B21</text>
<rect x="663.87" y="408.27" width="23" height="156.13" fill="#b9de7b"/>
<text x="675.4" y="557" text-anchor="middle" font-size="7.6" fill="#444" fill-opacity="0.9">47</text>
<text x="675.4" y="577.6" text-anchor="middle" font-size="8" font-weight="bold" fill="#4a4a4a" letter-spacing="0.3">B23</text>
<rect x="695.89" y="401.62" width="23" height="162.78" fill="#b9de7b"/>
<text x="707.4" y="557" text-anchor="middle" font-size="7.6" fill="#444" fill-opacity="0.9">49</text>
<text x="707.4" y="577.6" text-anchor="middle" font-size="8" font-weight="bold" fill="#4a4a4a" letter-spacing="0.3">B28</text>
<rect x="727.91" y="451.45" width="23" height="112.95" fill="#b9de7b"/>
<text x="739.4" y="557" text-anchor="middle" font-size="7.6" fill="#444" fill-opacity="0.9">34</text>
<text x="739.4" y="577.6" text-anchor="middle" font-size="8" font-weight="bold" fill="#4a4a4a" letter-spacing="0.3">B37</text>
<rect x="759.93" y="481.35" width="23" height="83.05" fill="#8ac1de"/>
<text x="771.4" y="557" text-anchor="middle" font-size="7.6" fill="#444" fill-opacity="0.9">25</text>
<text x="771.4" y="577.6" text-anchor="middle" font-size="8" font-weight="bold" fill="#4a4a4a" letter-spacing="0.3">R3</text>
<rect x="791.95" y="464.74" width="23" height="99.66" fill="#8ac1de"/>
<text x="803.5" y="557" text-anchor="middle" font-size="7.6" fill="#444" fill-opacity="0.9">30</text>
<text x="803.5" y="577.6" text-anchor="middle" font-size="8" font-weight="bold" fill="#4a4a4a" letter-spacing="0.3">R4</text>
<rect x="823.97" y="434.84" width="23" height="129.56" fill="#8ac1de"/>
<text x="835.5" y="557" text-anchor="middle" font-size="7.6" fill="#444" fill-opacity="0.9">39</text>
<text x="835.5" y="577.6" text-anchor="middle" font-size="8" font-weight="bold" fill="#4a4a4a" letter-spacing="0.3">R9</text>
<rect x="855.99" y="421.55" width="23" height="142.85" fill="#8ac1de"/>
<text x="867.5" y="557" text-anchor="middle" font-size="7.6" fill="#444" fill-opacity="0.9">43</text>
<text x="867.5" y="577.6" text-anchor="middle" font-size="8" font-weight="bold" fill="#4a4a4a" letter-spacing="0.3">R10</text>
<rect x="888.61" y="408.87" width="21.80" height="155.53" fill="#8ac1de" stroke="#1a1aff" stroke-width="1.2"/>
<text x="899.5" y="557" text-anchor="middle" font-size="7.6" fill="#444" fill-opacity="0.9">47</text>
<text x="899.5" y="577.6" text-anchor="middle" font-size="8" font-weight="bold" fill="#4a4a4a" letter-spacing="0.3">R11</text>
<rect x="920.03" y="468.06" width="23" height="96.34" fill="#8ac1de"/>
<text x="931.5" y="557" text-anchor="middle" font-size="7.6" fill="#444" fill-opacity="0.9">29</text>
<text x="931.5" y="577.6" text-anchor="middle" font-size="8" font-weight="bold" fill="#4a4a4a" letter-spacing="0.3">R20</text>
<rect x="952.05" y="448.13" width="23" height="116.27" fill="#8ac1de"/>
<text x="963.6" y="557" text-anchor="middle" font-size="7.6" fill="#444" fill-opacity="0.9">35</text>
<text x="963.6" y="577.6" text-anchor="middle" font-size="8" font-weight="bold" fill="#4a4a4a" letter-spacing="0.3">R21</text>
<line x1="83.0" y1="381.5" x2="83.0" y2="570.4" stroke="#b5b5b5" stroke-width="1.4"/>
<line x1="77.0" y1="564.4" x2="979.6" y2="564.4" stroke="#b0b0b0" stroke-width="1.2"/>
  <rect x="306.8" y="600" width="12.2" height="12.2" fill="#efb454"/>
  <rect x="359" y="600" width="12.2" height="12.2" fill="#bfbfbf"/>
  <rect x="416.2" y="600" width="12.2" height="12.2" fill="#f0ef6c"/>
  <rect x="476.6" y="600" width="12.2" height="12.2" fill="#b9de7b"/>
  <rect x="538.4" y="600" width="12.2" height="12.2" fill="#8ac1de"/>
  <rect x="612.8" y="600.6" width="11.2" height="11.2" fill="#fff" stroke="#1a1aff" stroke-width="1.1"/>
  <g font-size="8" fill="#636363">
    <text x="325" y="609" letter-spacing="-.35">GPS (G)</text>
    <text x="377.3" y="609" letter-spacing="-.25">SBAS (S)</text>
    <text x="434.3" y="609" letter-spacing="-.1">Galileo (E)</text>
    <text x="495" y="609" letter-spacing="-.05">BeiDou (B)</text>
    <text x="556.8" y="609" letter-spacing="-.2">GLONASS (R)</text>
    <text x="630.8" y="609" letter-spacing=".12">Not used in navigation</text>
  </g>
  <path d="M978.6 625.2 H982 V622" stroke="#444" stroke-width="1" fill="none"/>
</svg>

</body></html>
